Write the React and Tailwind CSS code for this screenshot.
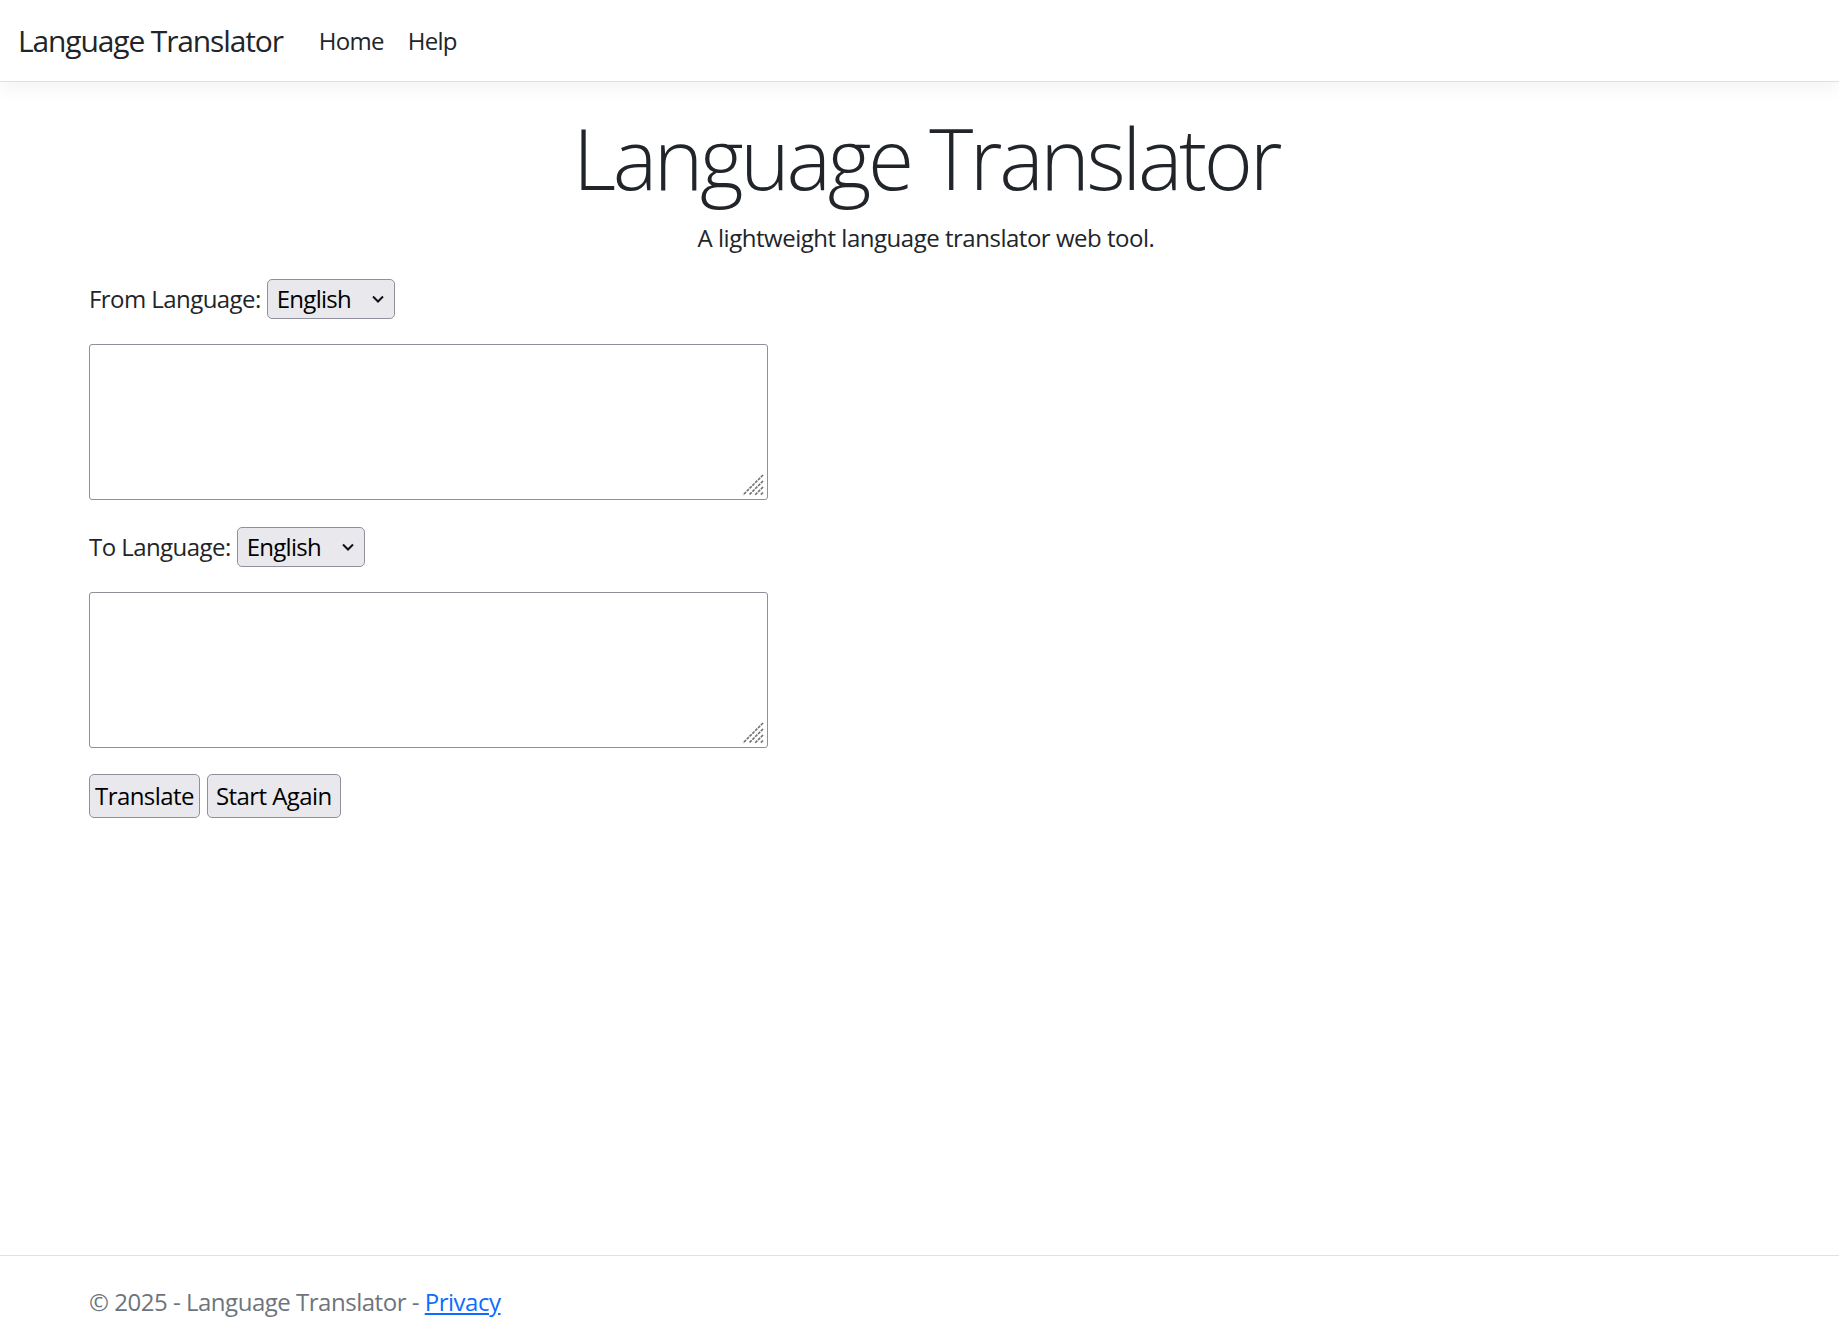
import React from 'react';

function LangSelect() {
  return (
    <div className="relative inline-block">
      <select
        defaultValue="English"
        className="appearance-none h-[40px] w-[128px] rounded-[5px] border border-[#8f8f9d] bg-[#e9e9ed] pl-[9px] pr-[30px] text-[24px] leading-[36px] tracking-[-0.03em] text-black outline-none"
      >
        <option>English</option>
        <option>French</option>
        <option>German</option>
        <option>Spanish</option>
      </select>
      <svg
        className="pointer-events-none absolute right-[10px] top-[15px] h-[10px] w-[14px]"
        viewBox="0 0 14 10"
        fill="none"
        stroke="#111"
        strokeWidth="2"
      >
        <path d="M2 2.5l5 5 5-5" />
      </svg>
    </div>
  );
}

function TextBox() {
  return (
    <div className="relative mt-[25px] w-[679px]">
      <textarea className="block h-[156px] w-full resize-none rounded-[3px] border border-[#8f8f9d] p-[3px] text-[24px] outline-none" />
      {/* resize grip */}
      <svg
        className="pointer-events-none absolute right-[4px] bottom-[4px] h-[22px] w-[22px]"
        viewBox="0 0 22 22"
        stroke="#707070"
        strokeWidth="1.6"
        strokeDasharray="3 1"
      >
        <path d="M21 1L1 21M21 7L7 21M21 13L13 21M21 18.5L18.5 21" />
      </svg>
    </div>
  );
}

export default function App() {
  return (
    <div className="h-screen overflow-hidden flex flex-col bg-white text-[#212529] tracking-[-0.035em] font-['Open_Sans','Noto_Sans',sans-serif]">
      {/* Navbar */}
      <nav className="h-[82px] shrink-0 border-b border-[#dee2e6] bg-white shadow-[0_6px_18px_rgba(0,0,0,0.05)] flex items-center px-[18px]">
        <a className="text-[30px] leading-[45px] tracking-[-0.038em] text-[#212529] mr-[24px]">Language Translator</a>
        <div className="flex items-center text-[24px] leading-[36px] tracking-[-0.03em] text-[#212529]">
          <a className="px-[12px]">Home</a>
          <a className="px-[12px]">Help</a>
        </div>
      </nav>

      {/* Main */}
      <main className="flex-1 pl-[89px] pr-[76px]">
        <div className="text-center mt-[26px]">
          <h1 className="text-[84px] leading-[100px] font-light tracking-[-0.04em]">Language Translator</h1>
          <p className="text-[24px] leading-[36px] mt-[12px] tracking-[-0.02em]">A lightweight language translator web tool.</p>
        </div>

        <div className="mt-[23px] flex items-center gap-[6px] text-[24px] leading-[36px]">
          <label>From Language:</label>
          <LangSelect />
        </div>
        <TextBox />

        <div className="mt-[27px] flex items-center gap-[6px] text-[24px] leading-[36px]">
          <label>To Language:</label>
          <LangSelect />
        </div>
        <TextBox />

        <div className="mt-[26px] flex gap-[7px]">
          <button className="h-[44px] rounded-[5px] border border-[#8f8f9d] bg-[#e9e9ed] px-[5px] text-[24px] leading-[36px] text-black">
            Translate
          </button>
          <button className="h-[44px] rounded-[5px] border border-[#8f8f9d] bg-[#e9e9ed] px-[8px] text-[24px] leading-[36px] text-black">
            Start Again
          </button>
        </div>
      </main>

      {/* Footer */}
      <footer className="h-[66px] shrink-0 overflow-hidden border-t border-[#dee2e6] pl-[89px] text-[24px] leading-[92px] tracking-[-0.02em] text-[#6c757d]">
        © 2025 - Language Translator - <a className="text-[#0d6efd] underline">Privacy</a>
      </footer>
    </div>
  );
}
